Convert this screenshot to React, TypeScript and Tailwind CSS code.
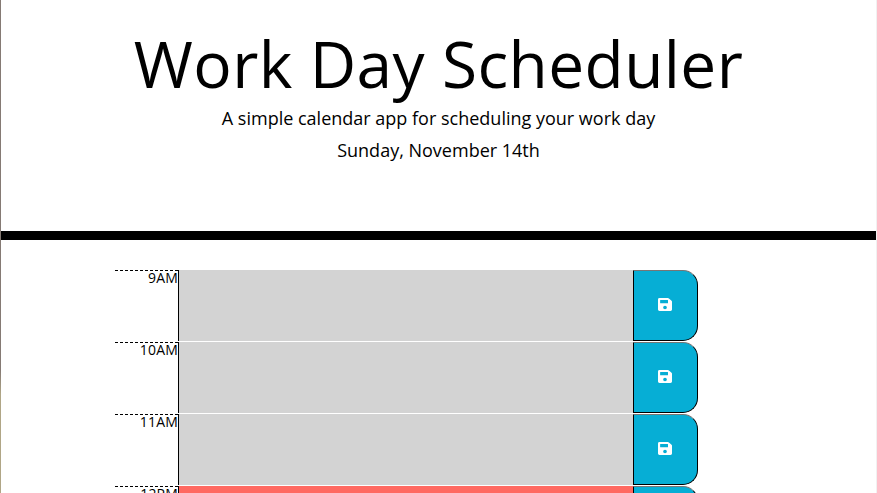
const rows = [
  { hour: '9AM', color: 'bg-[#d3d3d3]' },
  { hour: '10AM', color: 'bg-[#d3d3d3]' },
  { hour: '11AM', color: 'bg-[#d3d3d3]' },
  { hour: '12PM', color: 'bg-[#ff6961]' },
];

function SaveIcon() {
  return (
    <svg viewBox="0 0 448 448" className="mr-px mb-[2px] h-[13px] w-[14px]" preserveAspectRatio="none" fill="currentColor">
      <path
        fillRule="evenodd"
        d="M434 98L350 14A48 48 0 0 0 316 0H48A48 48 0 0 0 0 48V400A48 48 0 0 0 48 448H400A48 48 0 0 0 448 400V132A48 48 0 0 0 434 98ZM224 384A60 60 0 1 1 224 264A60 60 0 1 1 224 384ZM320 80V172A12 12 0 0 1 308 184H80A12 12 0 0 1 68 172V80A12 12 0 0 1 80 68H308A12 12 0 0 1 320 80Z"
      />
    </svg>
  );
}

export default function App() {
  return (
    <div className="flex h-[493px] overflow-hidden bg-white font-['Open_Sans',sans-serif] text-black">
      <div className="w-px shrink-0 bg-linear-to-b from-[#857a74] from-75% to-[#b0a686] to-80%" />
      <div className="min-w-0 flex-1">
        <header className="h-[240px] border-b-9 border-black pt-[25px] text-center">
          <h1 className="text-[64px] leading-[78px] tracking-[0.4px]">Work Day Scheduler</h1>
          <p className="text-lg leading-[30px]">A simple calendar app for scheduling your work day</p>
          <p className="mt-[2px] text-lg leading-[30px]">Sunday, November 14th</p>
        </header>
        <main className="mt-[30px] ml-[114px] flex flex-col">
          {rows.map((row) => (
            <div key={row.hour} className="flex h-[72px]">
              <div className="h-[71px] w-[63px] border-t border-dashed border-black text-right text-sm leading-[14px] tracking-[0.2px]">
                {row.hour}
              </div>
              <div className={`h-[71px] w-[455px] border-l border-black ${row.color}`} />
              <button className="flex h-[71px] w-[65px] items-center justify-center rounded-r-[15px] border border-t-[#767676] border-r-black border-b-black border-l-black bg-[#06aed5] text-white">
                <SaveIcon />
              </button>
            </div>
          ))}
        </main>
      </div>
      <div className="w-px shrink-0 bg-[#f1f1f1]" />
    </div>
  );
}
